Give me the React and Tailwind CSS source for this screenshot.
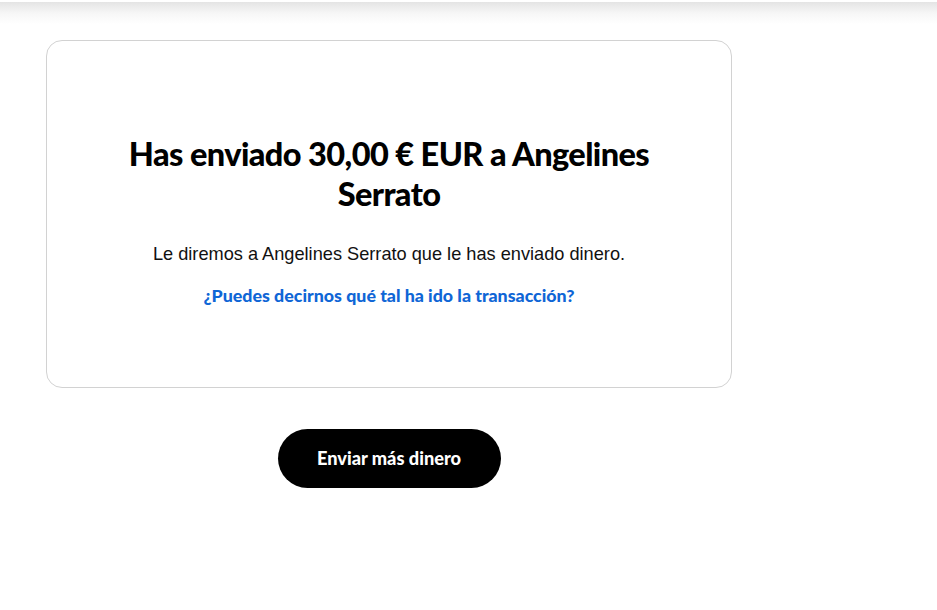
export default function App() {
  return (
    <div className="relative min-h-[610px] w-full bg-white" style={{ fontFamily: '"Liberation Sans", Arial, sans-serif' }}>
      <div className="h-[2px] bg-white" />
      <div className="h-[22px] bg-gradient-to-b from-[#e4e4e4] via-[#f6f6f6] to-white" />
      <div className="ml-[46px] w-[686px] pt-[16px]">
        <div className="flex h-[348px] flex-col items-center rounded-[16px] border border-[#d2d2d2] bg-white px-6 pt-[93px]">
          <h1 className="max-w-[560px] text-center font-['Lato',sans-serif] text-[32.5px] font-black leading-[40px] tracking-[-0.6px] text-black">
            Has enviado 30,00 € EUR a Angelines Serrato
          </h1>
          <p className="mt-[28px] text-center text-[18.2px] leading-[24px] text-[#111]">
            Le diremos a Angelines Serrato que le has enviado dinero.
          </p>
          <a href="#" className="mt-[17px] font-['Lato',sans-serif] text-[17.8px] font-black leading-[24px] text-[#0f66d6]">
            ¿Puedes decirnos qué tal ha ido la transacción?
          </a>
        </div>
        <div className="mt-[41px] flex justify-center">
          <button className="h-[59px] w-[223px] rounded-full bg-black font-['Lato',sans-serif] text-[18.2px] font-black text-white">
            Enviar más dinero
          </button>
        </div>
      </div>
    </div>
  );
}
